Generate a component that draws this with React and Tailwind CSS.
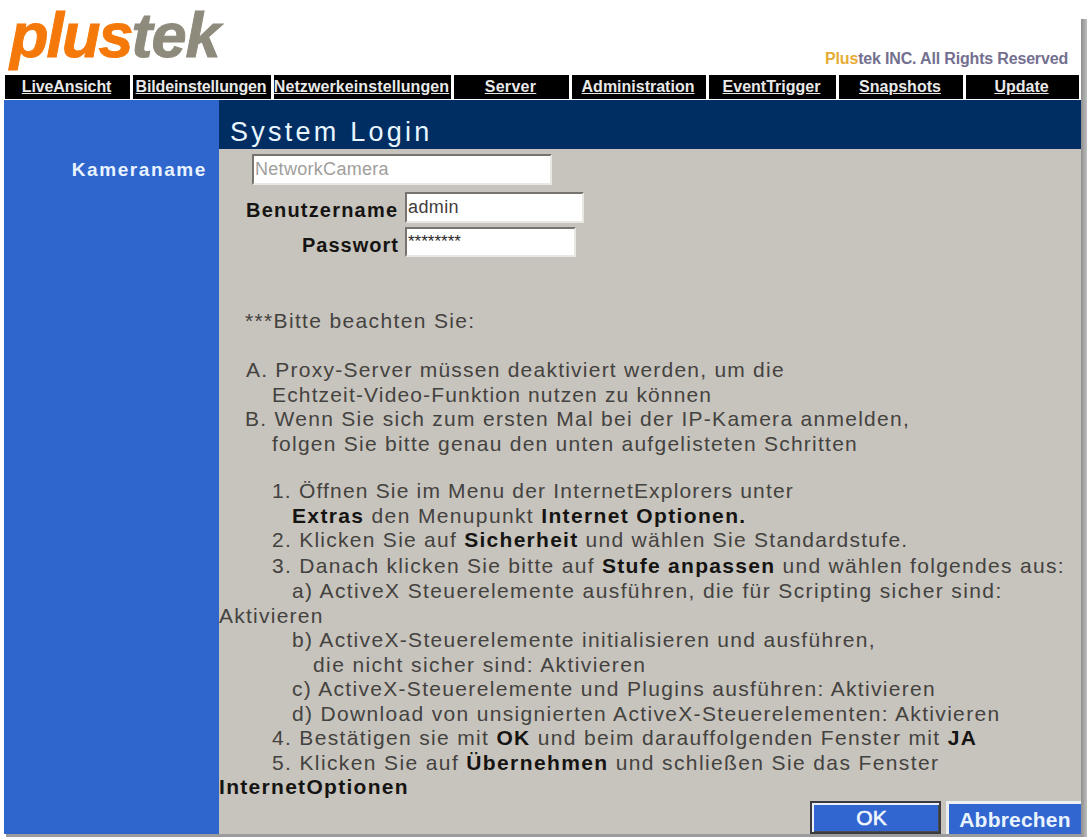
import React, { useState } from 'react';

const navItems = [
    { label: 'LiveAnsicht', cell: 'w-[125px] tracking-[-0.1px]' },
    { label: 'Bildeinstellungen', cell: 'w-[138px] tracking-[-0.15px]' },
    { label: 'Netzwerkeinstellungen', cell: 'w-[177px] tracking-[0.1px]' },
    { label: 'Server', cell: 'w-[115px] tracking-[0.3px]' },
    { label: 'Administration', cell: 'w-[134px]' },
    { label: 'EventTrigger', cell: 'w-[127px]' },
    { label: 'Snapshots', cell: 'w-[124px]' },
    { label: 'Update', cell: 'w-[113px]' },
];

const fieldStyle = 'block bg-white border-2 border-t-[#77736e] border-l-[#77736e] border-b-[#e9e7e2] border-r-[#e9e7e2] rounded-none px-[1px] outline-none';

const Line = ({ className, children }) => (
    <p className={`h-[24.55px] whitespace-nowrap ${className || ''}`}>{children}</p>
);

const Header = () => (
    <header className="flex h-[74px] justify-between">
        <h1 className="pl-[10px] pt-[3px] text-[63px] leading-[64px] font-bold italic tracking-[-1px] text-[#8e8a7c] [-webkit-text-stroke:1px_currentColor]">
            <span className="tracking-[-2px] text-[#f5790a]">plus</span>tek
        </h1>
        <p className="pr-[13px] pt-[49px] text-[16px] leading-[20px] font-bold text-[#73708f] tracking-[-0.17px]">
            <span className="text-[#e5ac35]">Plus</span>tek INC. All Rights Reserved
        </p>
    </header>
);

const NavBar = () => (
    <nav className="flex h-[26px] gap-[3px] pl-[5px] pt-px pb-px">
        {navItems.map((item) => (
            <a
                key={item.label}
                href="#"
                className={`flex h-6 shrink-0 items-center justify-center bg-black pr-[2px] text-[16px] leading-none font-bold text-[#e9e9e9] underline whitespace-nowrap ${item.cell}`}
            >
                {item.label}
            </a>
        ))}
    </nav>
);

const LoginForm = () => {
    const [user, setUser] = useState('admin');
    const [password, setPassword] = useState('********');

    return (
        <form className="pt-[5px]">
            <input
                className={`${fieldStyle} ml-[33px] h-[31px] w-[300px] text-[18px] tracking-[0.3px] text-[#a09e9b]`}
                value="NetworkCamera"
                readOnly
            />
            <div className="mt-[7px] flex items-center">
                <label className="w-[186px] pt-[5px] pl-[27px] text-[20px] leading-none font-bold tracking-[1.2px] whitespace-nowrap">Benutzername</label>
                <input
                    className={`${fieldStyle} h-[31px] w-[179px] text-[18px] tracking-[0.4px] text-[#3f3d3b]`}
                    value={user}
                    onChange={(e) => setUser(e.target.value)}
                />
            </div>
            <div className="mt-[4px] flex items-center">
                <label className="w-[186px] pt-[5px] pl-[83px] text-[20px] leading-none font-bold tracking-[1px] whitespace-nowrap">Passwort</label>
                <input
                    className={`${fieldStyle} h-[30px] w-[171px] text-[17px] text-[#2b2a29]`}
                    value={password}
                    onChange={(e) => setPassword(e.target.value)}
                />
            </div>
        </form>
    );
};

const Instructions = () => (
    <div className="mt-[52px] text-[21px] leading-[24.55px] text-[#44423f] [&_b]:text-[#151412]">
        <Line className="pl-[26px] tracking-[1.35px]">***Bitte beachten Sie:</Line>
        <Line />
        <Line className="pl-[27px] tracking-[1.23px]">A. Proxy-Server müssen deaktiviert werden, um die</Line>
        <Line className="pl-[53px] tracking-[1.15px]">Echtzeit-Video-Funktion nutzen zu können</Line>
        <Line className="pl-[26px] tracking-[1.29px]">B. Wenn Sie sich zum ersten Mal bei der IP-Kamera anmelden,</Line>
        <Line className="pl-[53px] tracking-[1.25px]">folgen Sie bitte genau den unten aufgelisteten Schritten</Line>
        <Line />
        <Line className="-mt-[1.5px] pl-[53px] tracking-[1.18px]">1. Öffnen Sie im Menu der InternetExplorers unter</Line>
        <Line className="pl-[73px] tracking-[1.36px]"><b>Extras</b> den Menupunkt <b>Internet Optionen.</b></Line>
        <Line className="pl-[53px] tracking-[1.27px]">2. Klicken Sie auf <b>Sicherheit</b> und wählen Sie Standardstufe.</Line>
        <Line className="mt-[1.5px] pl-[53px] tracking-[1.3px]">3. Danach klicken Sie bitte auf <b>Stufe anpassen</b> und wählen folgendes aus:</Line>
        <Line className="pl-[73px] tracking-[1.39px]">a) ActiveX Steuerelemente ausführen, die für Scripting sicher sind:</Line>
        <Line className="tracking-[1.25px]">Aktivieren</Line>
        <Line className="pl-[73px] tracking-[1.32px]">b) ActiveX-Steuerelemente initialisieren und ausführen,</Line>
        <Line className="pl-[94px] tracking-[1.4px]">die nicht sicher sind: Aktivieren</Line>
        <Line className="pl-[73px] tracking-[1.32px]">c) ActiveX-Steuerelemente und Plugins ausführen: Aktivieren</Line>
        <Line className="pl-[73px] tracking-[1.33px]">d) Download von unsignierten ActiveX-Steuerelementen: Aktivieren</Line>
        <Line className="pl-[53px] tracking-[1.34px]">4. Bestätigen sie mit <b>OK</b> und beim darauffolgenden Fenster mit <b>JA</b></Line>
        <Line className="pl-[53px] tracking-[1.38px]">5. Klicken Sie auf <b>Übernehmen</b> und schließen Sie das Fenster</Line>
        <Line className="tracking-[1.3px]"><b>InternetOptionen</b></Line>
    </div>
);

const App = () => (
    <div className="flex h-[837px] w-[1087px] overflow-hidden bg-white font-['Liberation_Sans',Arial,sans-serif]">
        <div className="flex w-[1081px] shrink-0 flex-col">
            <Header />
            <NavBar />
            <div className="ml-[4px] flex h-[734px]">
                <aside className="w-[215px] shrink-0 bg-[#2e66ce] pt-[60px] pr-[12px] text-right text-[19px] leading-[20px] font-bold tracking-[1.6px] text-[#e9f3ff]">
                    Kameraname
                </aside>
                <main className="flex w-[862px] flex-col bg-[#c7c4bd] text-[#151412]">
                    <h2 className="h-[49px] shrink-0 bg-[#002e63] pt-[16px] pl-[11px] text-[27px] leading-[32px] tracking-[3.25px] text-[#e9f6ff]">System Login</h2>
                    <LoginForm />
                    <Instructions />
                    <div className="mt-auto flex justify-end gap-[5px]">
                        <button className="h-[33px] w-[131px] border-2 border-[#3b3b3d] bg-[#3165cf] pr-[8px] text-[21px] leading-none text-[#f0f6ff] shadow-[inset_2px_2px_0_#e8effa,inset_-1px_-1px_0_#4a4a55] [-webkit-text-stroke:0.6px_currentColor]">OK</button>
                        <button className="h-[33px] w-[135px] border-t-[3px] border-l-[3px] border-[#eceef2] bg-[#3165cf] text-[21px] leading-none font-bold tracking-[0.2px] text-[#e9f3ff]">Abbrechen</button>
                    </div>
                </main>
            </div>
            <div className="ml-[6px] h-[3px] bg-[#9b9a9c]" />
        </div>
        <div className="mt-[19px] w-[6px] bg-linear-to-r from-[#8f8f8f] to-[#bdbdbd]" />
    </div>
);

export default App;
